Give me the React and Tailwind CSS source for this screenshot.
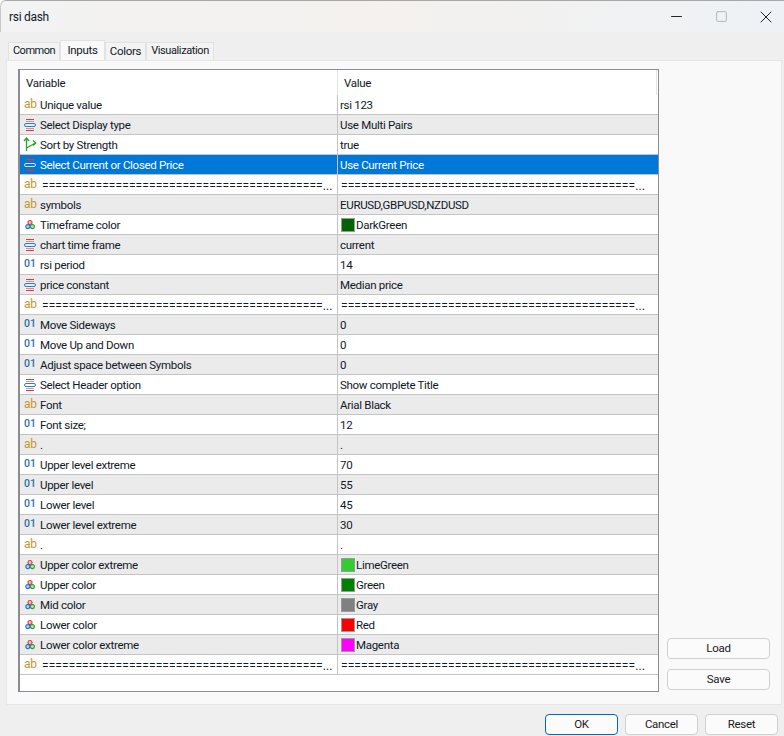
import { Minus, Square, X } from "lucide-react";

const LEFT_EQ = "=".repeat(42) + "...";
const RIGHT_EQ = "=".repeat(44) + "...";

const rows = [
  ["ab", "Unique value", "rsi 123"],
  ["enum", "Select Display type", "Use Multi Pairs"],
  ["bool", "Sort by Strength", "true"],
  ["enum", "Select Current or Closed Price", "Use Current Price", null, true],
  ["ab", LEFT_EQ, RIGHT_EQ],
  ["ab", "symbols", "EURUSD,GBPUSD,NZDUSD"],
  ["color", "Timeframe color", "DarkGreen", "#006400"],
  ["enum", "chart time frame", "current"],
  ["num", "rsi period", "14"],
  ["enum", "price constant", "Median price"],
  ["ab", LEFT_EQ, RIGHT_EQ],
  ["num", "Move Sideways", "0"],
  ["num", "Move Up and Down", "0"],
  ["num", "Adjust space between Symbols", "0"],
  ["enum", "Select Header option", "Show complete Title"],
  ["ab", "Font", "Arial Black"],
  ["num", "Font size;", "12"],
  ["ab", ".", "."],
  ["num", "Upper level extreme", "70"],
  ["num", "Upper level", "55"],
  ["num", "Lower level", "45"],
  ["num", "Lower level extreme", "30"],
  ["ab", ".", "."],
  ["color", "Upper color extreme", "LimeGreen", "#32cd32"],
  ["color", "Upper color", "Green", "#008000"],
  ["color", "Mid color", "Gray", "#808080"],
  ["color", "Lower color", "Red", "#ff0000"],
  ["color", "Lower color extreme", "Magenta", "#ff00ff"],
  ["ab", LEFT_EQ, RIGHT_EQ],
];

function TypeIcon({ type, selected }) {
  if (type === "ab") {
    return <span className="-mt-[2px] block w-[16px] pl-[1px] text-[12px] leading-[16px] tracking-[-0.4px] text-[#c8952b]">ab</span>;
  }
  if (type === "num") {
    return <span className="-mt-[2px] block w-[16px] pl-[1px] text-[10.5px] leading-[16px] font-medium tracking-normal text-[#2f6fa8]">01</span>;
  }
  if (type === "enum") {
    return (
      <svg width="16" height="16" viewBox="0 0 16 16" fill="none" className="shrink-0">
        <path d="M3 2.5h8M3 13.5h8" stroke="#e0393a" />
        <path d="M3 4.5h8M3 11.5h8" stroke="#e0393a" strokeOpacity="0.55" />
        <rect x="1.5" y="6.5" width="11" height="3" rx="1.5" stroke={selected ? "#cfe6fa" : "#2a7fc9"} />
      </svg>
    );
  }
  if (type === "bool") {
    return (
      <svg width="16" height="16" viewBox="0 0 16 16" fill="none" stroke="#1eab1e" strokeWidth="1.3" className="shrink-0">
        <path d="M1 4l2.5-3L6 4M3.5 1v13" />
        <path d="M3.5 11l9-5M10 3.5L12.8 6 10 8.5" />
      </svg>
    );
  }
  return (
    <svg width="16" height="16" viewBox="0 0 16 16" fill="none" strokeWidth="1.1" className="shrink-0">
      <circle cx="7" cy="5.5" r="2" fill="#f3c4c4" stroke="#d9403f" />
      <circle cx="4.8" cy="9.6" r="2" fill="#bcd8f2" stroke="#2a74c0" />
      <circle cx="9.4" cy="9.6" r="2" fill="#c4e6c4" stroke="#2e9e3e" />
    </svg>
  );
}

function Row({ row, index }) {
  const [type, name, value, swatch, selected] = row;
  const tone = selected
    ? "bg-[#0078d7] text-white"
    : index % 2 === 1
      ? "bg-[#ebebeb] text-[#101828]"
      : "bg-white text-[#101828]";
  const isRule = name.startsWith("==");

  return (
    <div className={`flex h-[20px] shrink-0 border-b border-[#c4c4c4] ${tone}`}>
      <div className="flex w-[317px] shrink-0 items-center pt-[1px] pl-[3px]">
        <TypeIcon type={type} selected={selected} />
        <span className={isRule ? "mt-[2px] ml-[3px] whitespace-nowrap text-[12px] tracking-[0.1px]" : "mt-[2px] ml-[1px] whitespace-nowrap"}>{name}</span>
      </div>
      <div className="flex min-w-0 flex-1 items-center border-l border-[#c4c4c4] pt-[1px] pl-[2px]">
        {swatch && (
          <span className="mr-[1px] ml-[1px] h-[14px] w-[14px] shrink-0 border border-[#9a9a9a]">
            <span className="block h-full w-full" style={{ backgroundColor: swatch }} />
          </span>
        )}
        <span className={isRule ? "mt-[2px] ml-[1px] whitespace-nowrap text-[12px] tracking-[0.1px]" : "mt-[2px] whitespace-nowrap"}>{value}</span>
      </div>
    </div>
  );
}

function Tab({ label, active, className }) {
  return (
    <div
      className={`flex items-center justify-center border border-b-0 border-[#e2e2e2] ${
        active ? "relative z-10 h-[20px] bg-[#f9f9f9]" : "h-[18px] bg-[#f3f3f3]"
      } ${className}`}
    >
      {label}
    </div>
  );
}

function DialogButton({ label, primary, className }) {
  return (
    <button
      className={`h-[21px] rounded-[4px] border bg-[#fbfbfb] text-[#1a1a1a] ${
        primary ? "border-[#0067c0]" : "border-[#d0d0d0]"
      } ${className}`}
    >
      {label}
    </button>
  );
}

export default function App() {
  return (
    <div className="flex h-[736px] w-[784px] flex-col overflow-hidden rounded-tl-[6px] border-t border-[#a8a8a8] bg-[#efefef] font-['Roboto',sans-serif] text-[11.5px] tracking-[-0.3px] text-[#101828]">
      {/* Title bar */}
      <div className="flex h-[31px] shrink-0 items-center justify-between rounded-tl-[6px] border-l border-[#c8c8c8] bg-gradient-to-r from-[#f3f3f3] via-[#f4f1ee] to-[#eef2f6] pl-[8px] pr-[8px]">
        <span className="text-[12px]">rsi dash</span>
        <div className="flex items-center gap-[25px]">
          <div className="flex w-[20px] justify-center">
            <Minus size={17} strokeWidth={1.4} className="text-[#222]" />
          </div>
          <div className="flex w-[20px] justify-center">
            <Square size={13} strokeWidth={1.8} className="text-[#b4b4b4]" />
          </div>
          <div className="flex w-[20px] justify-center">
            <X size={20} strokeWidth={1.2} className="text-[#222]" />
          </div>
        </div>
      </div>

      {/* Tabs */}
      <div className="mt-[8px] flex h-[20px] shrink-0 items-end pl-[8px]">
        <Tab label="Common" className="w-[52px] text-[11px] tracking-[-0.5px]" />
        <Tab label="Inputs" active className="w-[45px]" />
        <Tab label="Colors" className="w-[41px]" />
        <Tab label="Visualization" className="w-[68px] text-[11px] tracking-[-0.4px]" />
      </div>

      {/* Panel */}
      <div className="ml-[6px] flex h-[645px] w-[776px] shrink-0 border border-[#e6e6e6] bg-[#f9f9f9] pt-[8px] pl-[11px]">
        <div className="flex h-[623px] w-[641px] shrink-0 flex-col border border-l-2 border-[#8a8d93] bg-white">
          <div className="flex h-[25px] shrink-0 bg-white">
            <div className="w-[317px] pl-[6px] leading-[26px]">Variable</div>
            <div className="flex-1 border-l border-[#e4e4e4] pl-[6px] leading-[26px]">Value</div>
            <div className="mr-[1px] w-[1px] bg-[#e4e4e4]" />
          </div>
          {rows.map((row, i) => (
            <Row key={i} row={row} index={i} />
          ))}
        </div>
        <div className="flex flex-1 flex-col justify-end gap-[10px] pb-[14px] pl-[8px]">
          <DialogButton label="Load" className="w-[103px]" />
          <DialogButton label="Save" className="w-[103px]" />
        </div>
      </div>

      {/* Footer */}
      <div className="mt-[9px] flex justify-end gap-[7px] pr-[6px]">
        <DialogButton label="OK" primary className="w-[73px]" />
        <DialogButton label="Cancel" className="w-[73px]" />
        <DialogButton label="Reset" className="w-[73px]" />
      </div>
    </div>
  );
}
